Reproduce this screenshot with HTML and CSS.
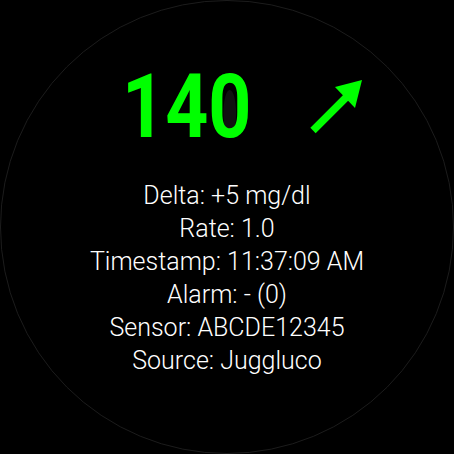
FILE: index.html
```html
<!DOCTYPE html>
<html>
<head>
<meta charset="utf-8">
<link rel="stylesheet" href="styles.css">
</head>
<body>
<div class="face">
  <div class="top">
    <div class="bg-wrap"><span class="bg">14<span class="zero">0</span></span></div>
    <svg class="arrow" width="60" height="60" viewBox="0 0 60 60">
      <line x1="7" y1="54.5" x2="41" y2="20.5" stroke="#00ff00" stroke-width="7.5"/>
      <polygon points="29,11 56,4 49,32" fill="#00ff00"/>
    </svg>
  </div>
  <div class="info">
    <div class="line">Delta: +5 mg/dl</div>
    <div class="line">Rate: 1.0</div>
    <div class="line">Timestamp: 11:37:09 AM</div>
    <div class="line">Alarm: - (0)</div>
    <div class="line">Sensor: ABCDE12345</div>
    <div class="line">Source: Juggluco</div>
  </div>
</div>
</body>
</html>
```

FILE: styles.css
```css
html, body {
  margin: 0;
  padding: 0;
  background: #000;
}
body {
  width: 454px;
  height: 454px;
  overflow: hidden;
}
.face {
  width: 454px;
  height: 454px;
  box-sizing: border-box;
  border: 1px solid #1c1c1c;
  border-radius: 50%;
  background: #000;
  display: flex;
  flex-direction: column;
  align-items: center;
  font-family: Roboto, "Liberation Sans", sans-serif;
}
.top {
  width: 100%;
  height: 89px;
  margin-top: 61px;
  display: flex;
  align-items: flex-start;
  padding-left: 121px;
  box-sizing: border-box;
}
.bg-wrap {
  width: 168px;
  height: 89px;
}
.bg {
  display: inline-block;
  font-size: 89px;
  line-height: 89px;
  font-weight: 700;
  color: #00ff00;
  transform: scaleX(0.845);
  transform-origin: left center;
  white-space: nowrap;
}
.zero {
  position: relative;
  display: inline-block;
}
.zero::before {
  content: "";
  position: absolute;
  left: 50%;
  top: 50%;
  width: 15px;
  height: 46px;
  margin-left: -7.5px;
  margin-top: -17px;
  border-radius: 50%;
  background: #111;
  z-index: -1;
}
.arrow {
  display: block;
  margin-top: 14px;
  margin-left: 16px;
}
.info {
  margin-top: 28px;
  display: flex;
  flex-direction: column;
  align-items: center;
  color: #fff;
  font-size: 25px;
  font-weight: 300;
  line-height: 33px;
}
.line {
  white-space: nowrap;
}
```
